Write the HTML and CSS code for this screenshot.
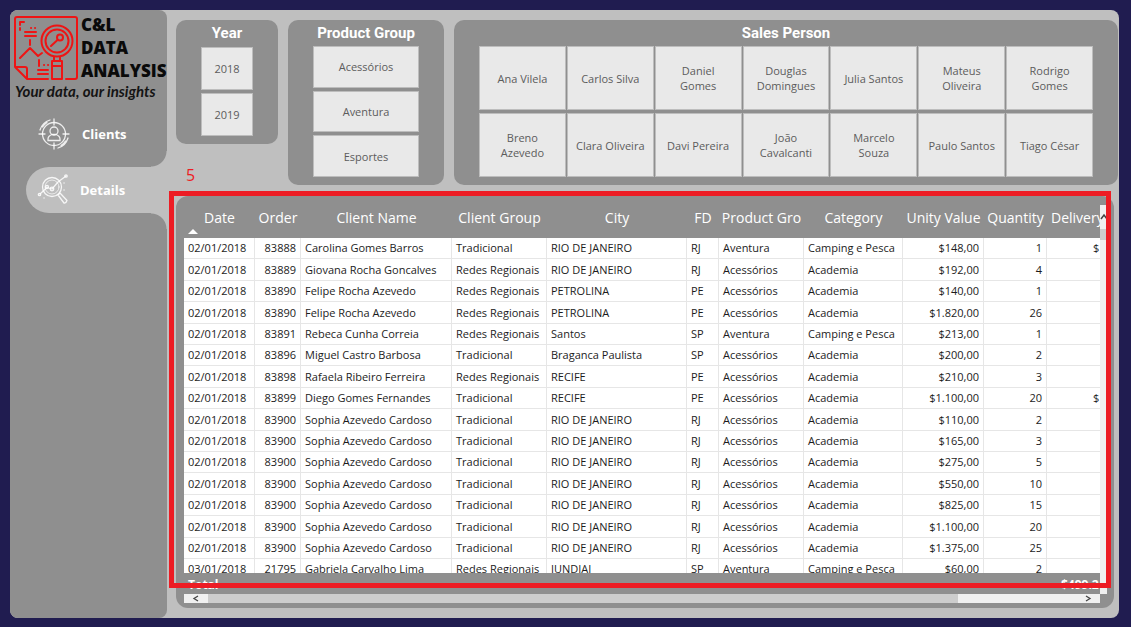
FILE: index.html
```
<!DOCTYPE html>
<html lang="en">
<head>
<meta charset="utf-8">
<title>C&amp;L Data Analysis – Details</title>
<link rel="stylesheet" href="styles.css">
</head>
<body>
<div class="board">
  <aside class="sidebar">
    <div class="brand">
      <svg class="brand-mark" viewBox="3 4 66 66" fill="none" stroke="#ee1414" stroke-width="2" stroke-linecap="round" stroke-linejoin="round" aria-hidden="true">
        <path d="M5 56V8q0-2 2-2H65q2 0 2 2V66q0 2-2 2H56M5 56L17 68H38M5 56H15q2 0 2 2V68"/>
        <path d="M10 19v-2M10 14V11H14M15 21H26M15 25H26M20 29V34M10 47L20 37L28 45L32 42"/>
        <path d="M21 17h.1M25 17h.1M34 54h.1M38 54h.1M29 49V55M28 59H38M28 63H38"/>
        <circle cx="47" cy="30" r="15.5"/>
        <circle cx="47" cy="30" r="11.5"/>
        <circle cx="50" cy="26.500" r="3"/>
        <path d="M47.500 29L41 35M44 46V50M50 46V50M42 50H52V68H42ZM42 55H52"/>
      </svg>
      <div class="brand-name">C&amp;L<br>DATA<br>ANALYSIS</div>
    </div>
    <div class="slogan">Your data, our insights</div>
    <nav class="nav">
      <a class="nav-link" href="#clients">
        <svg class="nav-icon" viewBox="0 0 32 32" fill="none" stroke="#fff" stroke-opacity=".85" stroke-width="1.300" stroke-linecap="round" aria-hidden="true">
          <circle cx="16" cy="16" r="11.500"/>
          <path d="M16 1V7M16 25V31M1 16H7M25 16H31M2 12A15 15 0 0 1 12 2M30 20A15 15 0 0 1 20 30M4.500 9A14 14 0 0 1 9 4.500M27.500 23A14 14 0 0 1 23 27.500"/>
          <circle cx="16" cy="13" r="4"/>
          <path d="M10 22.500V21q0-3 4-4.500h4q4 1.500 4 4.500V22.500Z"/>
        </svg>
        <span>Clients</span>
      </a>
      <a class="nav-link active" href="#details">
        <svg class="nav-icon" viewBox="0 0 32 32" fill="none" stroke="#fff" stroke-opacity=".85" stroke-width="1.300" stroke-linecap="round" stroke-linejoin="round" aria-hidden="true">
          <circle cx="15" cy="13" r="9.500"/>
          <circle cx="15" cy="13" r="7" stroke-width=".8"/>
          <path d="M3 20L10 13.500L15 15L21 8L29 2M21 21L23 19L30 26.500Q29 29.500 27 29ZM21 21L27 29"/>
          <circle cx="2.500" cy="20.500" r="1.200"/><circle cx="10" cy="13" r="1.500"/><circle cx="15" cy="15" r="1.800"/><circle cx="29" cy="2" r="1.200"/>
          <path d="M27 9h.1M27 16h.1M7 24h.1"/>
        </svg>
        <span>Details</span>
      </a>
    </nav>
  </aside>

  <main class="main">
    <div class="filters">
      <div class="year-column">
        <section class="slicer year">
          <h2>Year</h2>
          <div class="tiles">
            <button>2018</button>
            <button>2019</button>
          </div>
        </section>
        <div class="step">5</div>
      </div>
      <section class="slicer group">
        <h2>Product Group</h2>
        <div class="tiles">
          <button>Acessórios</button>
          <button>Aventura</button>
          <button>Esportes</button>
        </div>
      </section>
      <section class="slicer person">
        <h2>Sales Person</h2>
        <div class="tiles">
          <button>Ana Vilela</button>
          <button>Carlos Silva</button>
          <button>Daniel<br>Gomes</button>
          <button>Douglas<br>Domingues</button>
          <button>Julia Santos</button>
          <button>Mateus<br>Oliveira</button>
          <button>Rodrigo<br>Gomes</button>
          <button>Breno<br>Azevedo</button>
          <button>Clara Oliveira</button>
          <button>Davi Pereira</button>
          <button>João<br>Cavalcanti</button>
          <button>Marcelo<br>Souza</button>
          <button>Paulo Santos</button>
          <button>Tiago César</button>
        </div>
      </section>
    </div>

    <section class="report">
      <div class="viewport">
        <table>
          <colgroup><col class="c-date"><col class="c-order"><col class="c-client"><col class="c-cgroup"><col class="c-city"><col class="c-fd"><col class="c-pgroup"><col class="c-category"><col class="c-value"><col class="c-qty"><col class="c-delivery"></colgroup>
          <thead>
            <tr><th class="sorted">Date</th><th>Order</th><th>Client Name</th><th>Client Group</th><th>City</th><th>FD</th><th>Product Gro</th><th>Category</th><th>Unity Value</th><th>Quantity</th><th>Delivery</th></tr>
          </thead>
          <tbody>
            <tr><td>02/01/2018</td><td>83888</td><td>Carolina Gomes Barros</td><td>Tradicional</td><td>RIO DE JANEIRO</td><td>RJ</td><td>Aventura</td><td>Camping e Pesca</td><td>$148,00</td><td>1</td><td>$</td></tr>
            <tr><td>02/01/2018</td><td>83889</td><td>Giovana Rocha Goncalves</td><td>Redes Regionais</td><td>RIO DE JANEIRO</td><td>RJ</td><td>Acessórios</td><td>Academia</td><td>$192,00</td><td>4</td><td></td></tr>
            <tr><td>02/01/2018</td><td>83890</td><td>Felipe Rocha Azevedo</td><td>Redes Regionais</td><td>PETROLINA</td><td>PE</td><td>Acessórios</td><td>Academia</td><td>$140,00</td><td>1</td><td></td></tr>
            <tr><td>02/01/2018</td><td>83890</td><td>Felipe Rocha Azevedo</td><td>Redes Regionais</td><td>PETROLINA</td><td>PE</td><td>Acessórios</td><td>Academia</td><td>$1.820,00</td><td>26</td><td></td></tr>
            <tr><td>02/01/2018</td><td>83891</td><td>Rebeca Cunha Correia</td><td>Redes Regionais</td><td>Santos</td><td>SP</td><td>Aventura</td><td>Camping e Pesca</td><td>$213,00</td><td>1</td><td></td></tr>
            <tr><td>02/01/2018</td><td>83896</td><td>Miguel Castro Barbosa</td><td>Tradicional</td><td>Braganca Paulista</td><td>SP</td><td>Acessórios</td><td>Academia</td><td>$200,00</td><td>2</td><td></td></tr>
            <tr><td>02/01/2018</td><td>83898</td><td>Rafaela Ribeiro Ferreira</td><td>Redes Regionais</td><td>RECIFE</td><td>PE</td><td>Acessórios</td><td>Academia</td><td>$210,00</td><td>3</td><td></td></tr>
            <tr><td>02/01/2018</td><td>83899</td><td>Diego Gomes Fernandes</td><td>Tradicional</td><td>RECIFE</td><td>PE</td><td>Acessórios</td><td>Academia</td><td>$1.100,00</td><td>20</td><td>$</td></tr>
            <tr><td>02/01/2018</td><td>83900</td><td>Sophia Azevedo Cardoso</td><td>Tradicional</td><td>RIO DE JANEIRO</td><td>RJ</td><td>Acessórios</td><td>Academia</td><td>$110,00</td><td>2</td><td></td></tr>
            <tr><td>02/01/2018</td><td>83900</td><td>Sophia Azevedo Cardoso</td><td>Tradicional</td><td>RIO DE JANEIRO</td><td>RJ</td><td>Acessórios</td><td>Academia</td><td>$165,00</td><td>3</td><td></td></tr>
            <tr><td>02/01/2018</td><td>83900</td><td>Sophia Azevedo Cardoso</td><td>Tradicional</td><td>RIO DE JANEIRO</td><td>RJ</td><td>Acessórios</td><td>Academia</td><td>$275,00</td><td>5</td><td></td></tr>
            <tr><td>02/01/2018</td><td>83900</td><td>Sophia Azevedo Cardoso</td><td>Tradicional</td><td>RIO DE JANEIRO</td><td>RJ</td><td>Acessórios</td><td>Academia</td><td>$550,00</td><td>10</td><td></td></tr>
            <tr><td>02/01/2018</td><td>83900</td><td>Sophia Azevedo Cardoso</td><td>Tradicional</td><td>RIO DE JANEIRO</td><td>RJ</td><td>Acessórios</td><td>Academia</td><td>$825,00</td><td>15</td><td></td></tr>
            <tr><td>02/01/2018</td><td>83900</td><td>Sophia Azevedo Cardoso</td><td>Tradicional</td><td>RIO DE JANEIRO</td><td>RJ</td><td>Acessórios</td><td>Academia</td><td>$1.100,00</td><td>20</td><td></td></tr>
            <tr><td>02/01/2018</td><td>83900</td><td>Sophia Azevedo Cardoso</td><td>Tradicional</td><td>RIO DE JANEIRO</td><td>RJ</td><td>Acessórios</td><td>Academia</td><td>$1.375,00</td><td>25</td><td></td></tr>
            <tr><td>03/01/2018</td><td>21795</td><td>Gabriela Carvalho Lima</td><td>Redes Regionais</td><td>JUNDIAI</td><td>SP</td><td>Aventura</td><td>Camping e Pesca</td><td>$60,00</td><td>2</td><td></td></tr>
          </tbody>
          <tfoot>
            <tr><td colspan="10">Total</td><td>$499.2</td></tr>
          </tfoot>
        </table>
      </div>
      <div class="vscroll">
        <svg class="arrow-up" viewBox="0 0 7 24" fill="none" stroke="#444" stroke-width="1.500" aria-hidden="true"><path d="M1 14L4 10L7 14"/></svg>
        <div class="vthumb"></div>
      </div>
      <div class="hscroll">
        <svg class="arrow-side" viewBox="0 0 24 9" fill="none" stroke="#444" stroke-width="1.300" aria-hidden="true"><path d="M14 2L10 4.500L14 7"/></svg>
        <div class="hthumb"></div>
        <div class="htrack"></div>
        <svg class="arrow-side" viewBox="0 0 24 9" fill="none" stroke="#444" stroke-width="1.300" aria-hidden="true"><path d="M10 2L14 4.500L10 7"/></svg>
      </div>
      <div class="highlight"></div>
    </section>
  </main>
</div>
</body>
</html>
```
FILE: styles.css
```
* { box-sizing: border-box; }

body {
  margin: 0;
  height: 100vh;
  padding: 10px 12px 9px 10px;
  background: #201c50;
  font-family: "Open Sans", "Noto Sans", sans-serif;
  font-size: 11px;
}

.board {
  display: flex;
  height: 100%;
  background: #bfbfbf;
  border-radius: 8px;
}

/* Sidebar */
.sidebar {
  flex: 0 0 157px;
  background: #8f8f8f;
  border-radius: 8px;
}

.brand { display: flex; gap: 2px; padding: 5px 0 0 3px; }
.brand-mark { flex: none; width: 66px; height: 66px; }
.brand-name {
  margin-top: -2px;
  font-size: 17px;
  font-weight: 800;
  line-height: 23px;
  color: #0a0a0a;
}
.slogan {
  padding-left: 5px;
  font: italic 700 15px/18px Lato, sans-serif;
  color: #141414;
}

.nav { display: flex; flex-direction: column; gap: 10px; padding-top: 11px; }
.nav-link {
  display: flex;
  align-items: center;
  gap: 12px;
  height: 46px;
  padding-left: 28px;
  color: #fff;
  font-size: 13px;
  font-weight: 700;
  text-decoration: none;
}
.nav-icon { width: 32px; height: 32px; }
.nav-link.active {
  position: relative;
  gap: 11px;
  margin-left: 16px;
  padding-left: 11px;
  background: #bfbfbf;
  border-radius: 23px 0 0 23px;
}
.nav-link.active::before,
.nav-link.active::after {
  content: "";
  position: absolute;
  right: 0;
  width: 16px;
  height: 16px;
}
.nav-link.active::before {
  bottom: 100%;
  background: radial-gradient(circle at 0 0, #8f8f8f 15px, #bfbfbf 16px);
}
.nav-link.active::after {
  top: 100%;
  background: radial-gradient(circle at 0 100%, #8f8f8f 15px, #bfbfbf 16px);
}

/* Slicers */
.main {
  flex: 1;
  min-width: 0;
  display: flex;
  flex-direction: column;
  gap: 11px;
  padding: 10px 1px 10px 9px;
}
.filters { display: flex; gap: 10px; }
.year-column { flex: 0 0 102px; }
.step {
  margin: 20px 0 0 10px;
  padding-top: 2px;
  font-size: 16px;
  line-height: 19px;
  color: #ed1c24;
}
.slicer {
  display: flex;
  flex-direction: column;
  gap: 4px;
  padding: 4px 25px 8px;
  background: #8f8f8f;
  border-radius: 10px;
}
.slicer h2 {
  margin: 0;
  color: #fff;
  font: 700 15px/18px Roboto, sans-serif;
  text-align: center;
}
.tiles { flex: 1; display: grid; gap: 3px; }
.tiles button {
  min-height: 41px;
  padding: 0;
  border: 1px solid #bdbdbd;
  background: #e9e9e9;
  color: #5c5c5c;
  font: inherit;
  line-height: 15px;
}
.year button { min-height: 43px; }
.year .tiles { margin-top: 1px; }
.group { flex: 0 0 156px; }
.person { flex: 1; }
.person .tiles { grid-template-columns: repeat(7, 1fr); gap: 3px 1px; }
.person button { min-height: 64px; }

/* Report table */
.report {
  position: relative;
  flex: 1;
  min-height: 0;
  display: grid;
  grid-template-columns: minmax(0, 1fr) 7px;
  grid-template-rows: minmax(0, 1fr) 9px;
  margin-right: 4px;
  padding: 9px 7px 5px 8px;
  background: #8f8f8f;
  border-radius: 12px;
}
.viewport { overflow: hidden; }
table {
  width: 963px;
  table-layout: fixed;
  border-collapse: separate;
  border-spacing: 0;
}
.c-date { width: 71px; }
.c-order { width: 46px; }
.c-client { width: 151px; }
.c-cgroup { width: 95px; }
.c-city { width: 140px; }
.c-fd { width: 32px; }
.c-pgroup { width: 85px; }
.c-category { width: 99px; }
.c-value { width: 81px; }
.c-qty { width: 63px; }
.c-delivery { width: 100px; }

th {
  height: 33px;
  padding: 3px 0 0;
  background: #8f8f8f;
  color: #fff;
  font-size: 14px;
  font-weight: 400;
  line-height: 20px;
  vertical-align: top;
  white-space: nowrap;
}
th:last-child { padding-left: 4px; text-align: left; }
.sorted { position: relative; }
.sorted::after {
  content: "";
  position: absolute;
  left: 4px;
  bottom: 4px;
  border: 5px solid transparent;
  border-top: 0;
  border-bottom-color: #fff;
}

td {
  height: 21px;
  padding: 0 4px;
  border-right: 1px solid #e6e6e6;
  border-bottom: 1px solid #e6e6e6;
  background: #fff;
  color: #1c1c1c;
  line-height: 20px;
  white-space: nowrap;
}
/* Alternating heights average the row pitch to 21.4px */
tbody tr:nth-child(5n+2) td,
tbody tr:nth-child(5n+4) td { height: 22px; }
td:nth-child(2), td:nth-child(9), td:nth-child(10) { text-align: right; }
tbody td:last-child { padding-left: 46px; border-right: 0; }

tfoot td {
  position: sticky;
  bottom: 0;
  padding-top: 2px;
  border: 0;
  background: #8f8f8f;
  color: #fff;
  font-size: 12px;
  font-weight: 700;
  line-height: 19px;
}
tfoot td:last-child { padding-left: 14px; text-align: left; }

/* Scroll bars */
.vscroll { background: #f0f0f0; }
.arrow-up { display: block; width: 7px; height: 24px; }
.vthumb { height: 11px; background: #cdcdcd; }
.hscroll { display: flex; background: #f0f0f0; }
.arrow-side { flex: none; width: 24px; height: 9px; }
.hthumb { flex: 750; background: #cdcdcd; }
.htrack { flex: 118; }

/* Annotation frame over the table */
.highlight {
  position: absolute;
  inset: -5px 3px 20px -7px;
  border: 5px solid #ed1c24;
}
```
